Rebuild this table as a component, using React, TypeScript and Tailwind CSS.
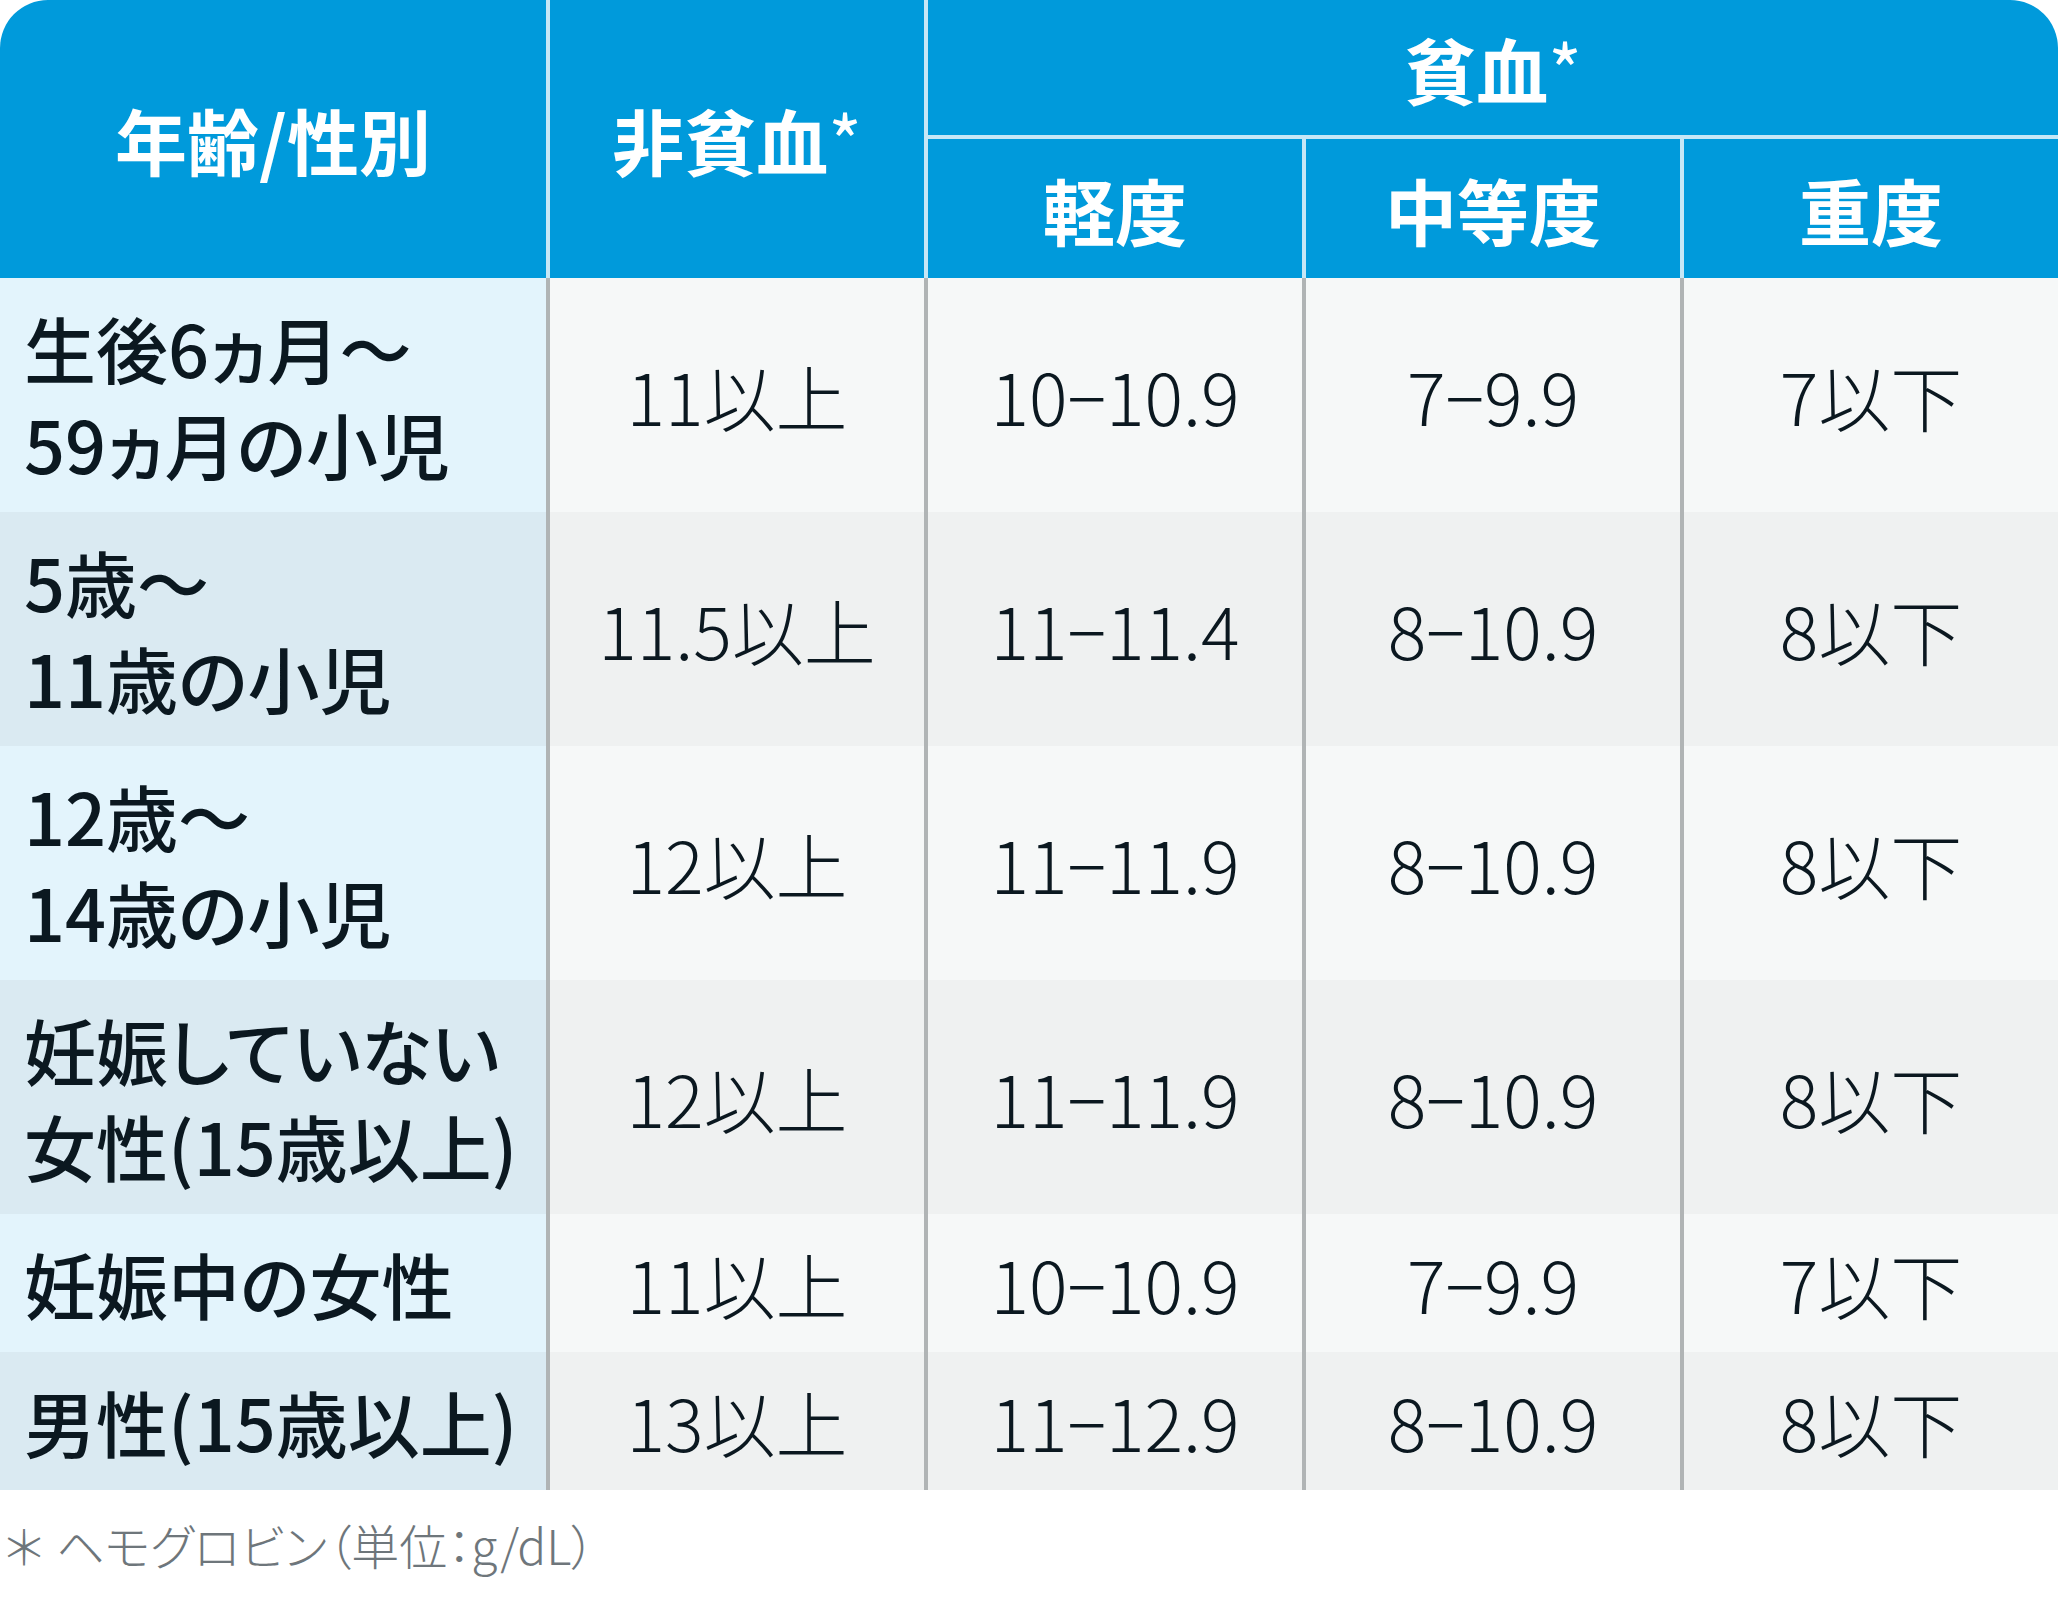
import React from "react";

type Row = { label: string[]; values: string[]; tall: boolean };

const rows: Row[] = [
  { label: ["生後6ヵ月〜", "59ヵ月の小児"], values: ["11以上", "10−10.9", "7−9.9", "7以下"], tall: true },
  { label: ["5歳〜", "11歳の小児"], values: ["11.5以上", "11−11.4", "8−10.9", "8以下"], tall: true },
  { label: ["12歳〜", "14歳の小児"], values: ["12以上", "11−11.9", "8−10.9", "8以下"], tall: true },
  { label: ["妊娠していない", "女性(15歳以上)"], values: ["12以上", "11−11.9", "8−10.9", "8以下"], tall: true },
  { label: ["妊娠中の女性"], values: ["11以上", "10−10.9", "7−9.9", "7以下"], tall: false },
  { label: ["男性(15歳以上)"], values: ["13以上", "11−12.9", "8−10.9", "8以下"], tall: false },
];

const Star = () => <span className="font-normal">*</span>;

export default function App() {
  return (
    <div className="w-[2058px] bg-white font-['Noto_Sans_CJK_JP','Noto_Sans_CJK_SC',sans-serif] text-[#0b1820] [font-feature-settings:'palt']">
      <div className="overflow-hidden rounded-t-[48px]">
        {/* header */}
        <div className="grid grid-cols-[546px_378px_378px_378px_378px] grid-rows-[139px_139px] bg-[#009adb] text-[72px] font-bold text-white">
          <div className="row-span-2 flex items-center justify-center">年齢/性別</div>
          <div className="row-span-2 flex items-center justify-center border-l-4 border-[#c6e7f6]">
            非貧血<Star />
          </div>
          <div className="col-span-3 flex items-center justify-center border-l-4 border-b-4 border-[#c6e7f6]">
            貧血<Star />
          </div>
          <div className="flex items-center justify-center border-l-4 border-[#c6e7f6]">軽度</div>
          <div className="flex items-center justify-center border-l-4 border-[#c6e7f6]">中等度</div>
          <div className="flex items-center justify-center border-l-4 border-[#c6e7f6]">重度</div>
        </div>

        {/* body */}
        {rows.map((row, i) => {
          const even = i % 2 === 1;
          return (
            <div
              key={i}
              className={`grid grid-cols-[546px_378px_378px_378px_378px] ${row.tall ? "h-[234px]" : "h-[138px]"}`}
            >
              <div
                className={`flex flex-col justify-center pl-[24px] text-[72px] font-medium leading-[96px] ${
                  even ? "bg-[#daeaf2]" : "bg-[#e3f4fc]"
                }`}
              >
                {row.label.map((l) => (
                  <div key={l}>{l}</div>
                ))}
              </div>
              {row.values.map((v, j) => (
                <div
                  key={j}
                  className={`flex items-center justify-center border-l-4 border-[#b0b4b5] text-[72px] font-light ${
                    even ? "bg-[#eff1f1]" : "bg-[#f6f8f8]"
                  }`}
                >
                  {v}
                </div>
              ))}
            </div>
          );
        })}
      </div>

      <div className="mt-[22px] h-[92px] text-[48px] font-light leading-[64px] text-[#6e767b]">
        <span className="mr-[8px] [font-feature-settings:normal]">＊</span>ヘモグロビン（単位：g/dL）
      </div>
    </div>
  );
}
